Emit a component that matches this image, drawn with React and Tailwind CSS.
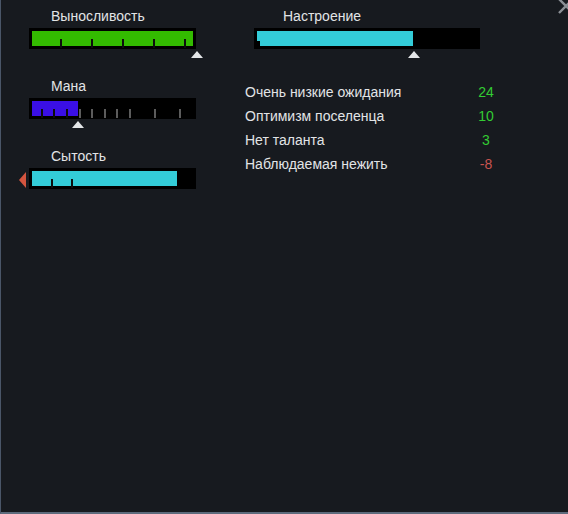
import React from "react";

const font = { fontFamily: '"Liberation Sans", Arial, sans-serif' };

// Small white marker under a bar
function Marker({ left }) {
  return (
    <div className="relative h-[10px]">
      <svg
        className="absolute top-[2px]"
        style={{ left: left - 6 }}
        width="12"
        height="7"
        viewBox="0 0 12 7"
      >
        <path d="M6 0 L12 7 L0 7 Z" fill="#e4e6e8" />
      </svg>
    </div>
  );
}

function Bar({ width, fill, color, ticks = [], notch = false }) {
  return (
    <div
      className="relative h-[21px] bg-black p-[3px]"
      style={{ width }}
    >
      <div className="relative h-[15px]">
        <div className="h-full" style={{ width: fill, background: color }} />
        {notch && (
          <div className="absolute left-0 top-[10px] h-[5px] w-[3px] bg-black" />
        )}
      </div>
      {ticks.map((x) => (
        <div
          key={x}
          className="absolute top-[11px] h-[9px] w-[2px]"
          style={{
            left: x,
            background: x < fill + 3 ? "#0d0d0d" : "#5c5c5c",
          }}
        />
      ))}
    </div>
  );
}

function Label({ children, indent }) {
  return (
    <div
      className="h-[16px] text-[14px] leading-[16px] text-[#e2e4e6]"
      style={{ paddingLeft: indent }}
    >
      {children}
    </div>
  );
}

const modifiers = [
  { name: "Очень низкие ожидания", value: "24", good: true },
  { name: "Оптимизм поселенца", value: "10", good: true },
  { name: "Нет таланта", value: "3", good: true },
  { name: "Наблюдаемая нежить", value: "-8", good: false },
];

export default function App() {
  return (
    <div
      className="relative h-[514px] w-[568px] overflow-hidden border-b-2 border-l border-b-[#5d6b7c] border-l-[#4a5668] bg-[#171a1f]"
      style={font}
    >
      {/* close button, partly off the edge */}
      <svg
        className="absolute right-[-8px] top-[-4px]"
        width="20"
        height="20"
        viewBox="0 0 20 20"
      >
        <path
          d="M3 3 L17 17 M17 3 L3 17"
          stroke="#8c9096"
          strokeWidth="2.4"
          fill="none"
        />
      </svg>

      <div className="flex pt-[8px]">
        {/* needs column */}
        <div className="flex w-[196px] flex-col pl-[28px]">
          <div className="flex h-[70px] flex-col gap-[4px]">
            <Label indent={22}>Выносливость</Label>
            <div>
              <Bar
                width={167}
                fill={161}
                color="#33bb00"
                ticks={[31, 62, 93, 124, 155]}
              />
              <Marker left={168} />
            </div>
          </div>

          <div className="flex h-[70px] flex-col gap-[4px]">
            <Label indent={22}>Мана</Label>
            <div>
              <Bar
                width={167}
                fill={46}
                color="#3a0fe6"
                ticks={[12, 24, 37, 50, 62, 75, 87, 100, 125, 150]}
              />
              <Marker left={49} />
            </div>
          </div>

          <div className="flex h-[70px] flex-col gap-[4px]">
            <Label indent={22}>Сытость</Label>
            <div className="relative">
              <Bar width={167} fill={145} color="#33ccd8" ticks={[22, 42]} />
              <svg
                className="absolute left-[-10px] top-[4px]"
                width="7"
                height="16"
                viewBox="0 0 7 16"
              >
                <path d="M7 0 L7 16 L0 8 Z" fill="#d4553f" />
              </svg>
            </div>
          </div>
        </div>

        {/* mood column */}
        <div className="ml-[48px] flex flex-col">
          <div className="flex flex-col gap-[4px] pl-[9px]">
            <Label indent={29}>Настроение</Label>
            <div>
              <Bar width={226} fill={156} color="#33ccd8" notch />
              <Marker left={160} />
            </div>
          </div>

          <div className="mt-[21px] flex w-[256px] flex-col">
            {modifiers.map((m) => (
              <div
                key={m.name}
                className="flex h-[24px] items-center text-[14px] leading-[24px]"
              >
                <span className="flex-1 text-[#e2e4e6]">{m.name}</span>
                <span
                  className={
                    "w-[30px] text-center " +
                    (m.good ? "text-[#33cc33]" : "text-[#c85450]")
                  }
                >
                  {m.value}
                </span>
              </div>
            ))}
          </div>
        </div>
      </div>
    </div>
  );
}
